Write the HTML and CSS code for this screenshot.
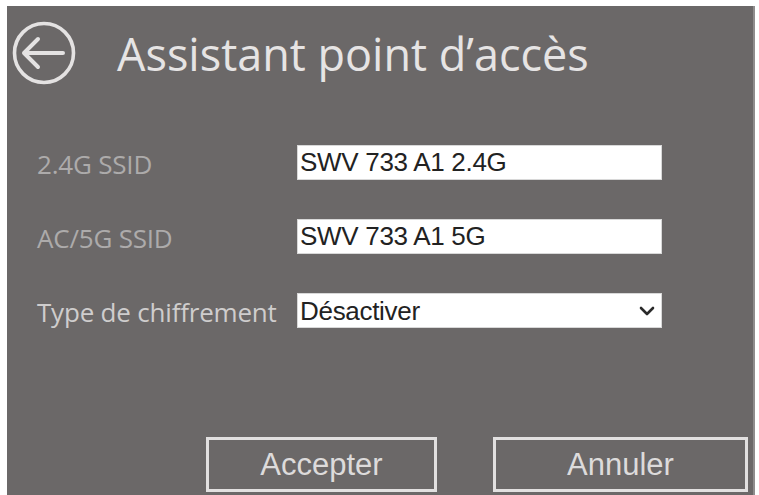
FILE: index.html
```html
<!DOCTYPE html>
<html lang="fr">
<head>
<meta charset="utf-8">
<title>Assistant point d'accès</title>
<link rel="stylesheet" href="styles.css">
</head>
<body>
<main class="panel">
  <header class="header">
    <button class="back" type="button" aria-label="Retour">
      <svg width="64" height="64" viewBox="0 0 64 64" aria-hidden="true">
        <circle cx="32" cy="32" r="29.5" fill="none" stroke="#e4e2e2" stroke-width="3.6"/>
        <path d="M51 32 H12 M26 18 L12 32 L26 46" fill="none" stroke="#e4e2e2" stroke-width="4" stroke-linecap="round" stroke-linejoin="round"/>
      </svg>
    </button>
    <h1 class="title">Assistant point d’accès</h1>
  </header>

  <form class="form">
    <label class="label dim" for="ssid24">2.4G SSID</label>
    <input class="field" id="ssid24" type="text" value="SWV 733 A1 2.4G">

    <label class="label dim" for="ssid5">AC/5G SSID</label>
    <input class="field" id="ssid5" type="text" value="SWV 733 A1 5G">

    <span class="label">Type de chiffrement</span>
    <div class="field select" role="combobox" aria-expanded="false">
      <span>Désactiver</span>
      <svg class="chevron" width="16" height="10" viewBox="0 0 16 10" aria-hidden="true">
        <path d="M2 2 L8 8 L14 2" fill="none" stroke="#2a2a2a" stroke-width="2.6" stroke-linecap="round" stroke-linejoin="round"/>
      </svg>
    </div>
  </form>

  <footer class="actions">
    <button class="btn accept" type="button">Accepter</button>
    <button class="btn cancel" type="button">Annuler</button>
  </footer>
</main>
</body>
</html>
```

FILE: styles.css
```css
html, body {
  margin: 0;
  padding: 0;
  background: #ffffff;
}

body {
  width: 759px;
  height: 495px;
  overflow: hidden;
}

.panel {
  box-sizing: border-box;
  margin: 6px 0 0 7px;
  width: 748px;
  height: 489px;
  background: #6b6868;
  border-right: 2px solid #8f8d8d;
  display: flex;
  flex-direction: column;
}

/* title bar: round back arrow + page title */
.header {
  display: flex;
  align-items: center;
  gap: 41px;
  padding: 14px 0 0 5px;
  height: 66px;
}

.back {
  display: block;
  padding: 0;
  margin: 0;
  border: 0;
  background: none;
  width: 64px;
  height: 64px;
}

.back svg {
  display: block;
}

.title {
  margin: 0;
  font-family: "Open Sans", "Noto Sans", sans-serif;
  font-weight: 400;
  font-size: 45px;
  line-height: 1;
  color: #e6e4e4;
}

/* settings grid: labels on the left, fields on the right */
.form {
  display: grid;
  grid-template-columns: 260px 365px;
  grid-auto-rows: 35px;
  row-gap: 39px;
  align-items: center;
  margin: 59px 0 0 30px;
}

.label {
  font-family: "Open Sans", "Noto Sans", sans-serif;
  font-weight: 400;
  font-size: 26px;
  line-height: 35px;
  letter-spacing: -0.2px;
  color: #cfcdcd;
  white-space: nowrap;
  padding-top: 4px;
}

.label.dim {
  color: #adabab;
}

.field {
  box-sizing: border-box;
  width: 365px;
  height: 35px;
  margin: 0;
  padding: 0 2px;
  border: 1px solid #d8d8d8;
  background: #ffffff;
  font-family: "Liberation Sans", Arial, sans-serif;
  font-size: 26px;
  letter-spacing: -0.3px;
  color: #222222;
  outline: none;
}

.select {
  display: flex;
  align-items: center;
  justify-content: space-between;
  padding-right: 6px;
  line-height: 1;
}

.chevron {
  display: block;
}

/* bottom buttons */
.actions {
  display: flex;
  gap: 56px;
  margin-top: auto;
  padding: 0 0 3px 199px;
}

.btn {
  box-sizing: border-box;
  height: 55px;
  background: transparent;
  border: 3px solid #e2e0e0;
  font-family: "Liberation Sans", Arial, sans-serif;
  font-size: 31px;
  color: #dddbdb;
  padding: 0;
}

.accept {
  width: 231px;
}

.cancel {
  width: 255px;
}
```
